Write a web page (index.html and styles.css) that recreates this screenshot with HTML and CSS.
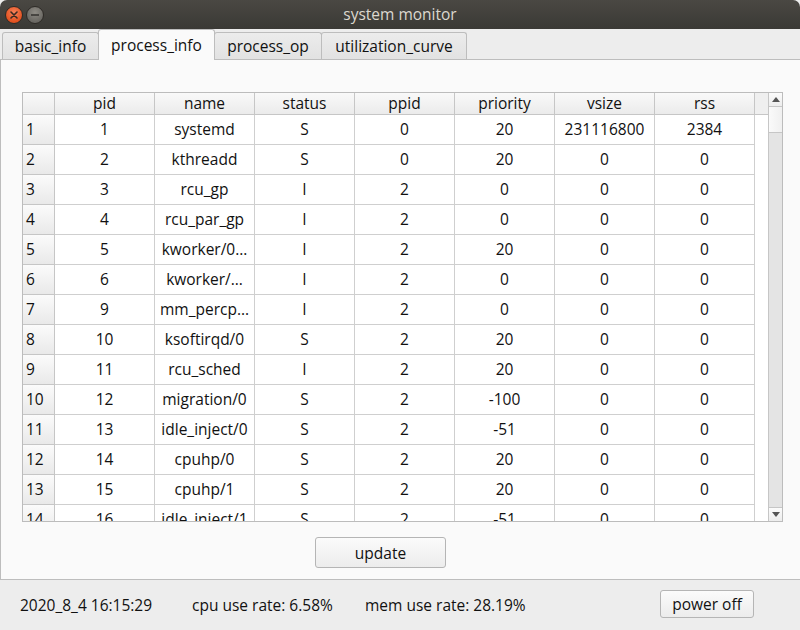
FILE: index.html
```html
<!DOCTYPE html>
<html>
<head>
<meta charset="utf-8">
<title>system monitor</title>
<link rel="stylesheet" href="styles.css">
</head>
<body>
<div class="window">
  <div class="titlebar">
    <div class="wbtns">
      <span class="wbtn close">
        <svg width="8" height="8" viewBox="0 0 8 8"><path d="M1 1L7 7M7 1L1 7" stroke="#3a2a22" stroke-width="1.6" stroke-linecap="round"/></svg>
      </span>
      <span class="wbtn min">
        <svg width="8" height="8" viewBox="0 0 8 8"><path d="M0.5 4H7.5" stroke="#33322f" stroke-width="1.6" stroke-linecap="round"/></svg>
      </span>
    </div>
    <div class="title">system monitor</div>
    <div></div>
  </div>

  <div class="tabbar">
    <div class="tab w1">basic_info</div>
    <div class="tab w2 active">process_info</div>
    <div class="tab w3">process_op</div>
    <div class="tab w4">utilization_curve</div>
  </div>

  <div class="pane">
    <div class="tableview">
      <div class="grid">
        <div class="hd corner"></div>
        <div class="hd">pid</div><div class="hd">name</div><div class="hd">status</div><div class="hd">ppid</div><div class="hd">priority</div><div class="hd">vsize</div><div class="hd">rss</div><div class="hd fill"></div>

        <div class="vh">1</div><div class="c">1</div><div class="c">systemd</div><div class="c">S</div><div class="c">0</div><div class="c">20</div><div class="c">231116800</div><div class="c">2384</div><div class="f"></div>
        <div class="vh">2</div><div class="c">2</div><div class="c">kthreadd</div><div class="c">S</div><div class="c">0</div><div class="c">20</div><div class="c">0</div><div class="c">0</div><div class="f"></div>
        <div class="vh">3</div><div class="c">3</div><div class="c">rcu_gp</div><div class="c">I</div><div class="c">2</div><div class="c">0</div><div class="c">0</div><div class="c">0</div><div class="f"></div>
        <div class="vh">4</div><div class="c">4</div><div class="c">rcu_par_gp</div><div class="c">I</div><div class="c">2</div><div class="c">0</div><div class="c">0</div><div class="c">0</div><div class="f"></div>
        <div class="vh">5</div><div class="c">5</div><div class="c">kworker/0…</div><div class="c">I</div><div class="c">2</div><div class="c">20</div><div class="c">0</div><div class="c">0</div><div class="f"></div>
        <div class="vh">6</div><div class="c">6</div><div class="c">kworker/…</div><div class="c">I</div><div class="c">2</div><div class="c">0</div><div class="c">0</div><div class="c">0</div><div class="f"></div>
        <div class="vh">7</div><div class="c">9</div><div class="c">mm_percp…</div><div class="c">I</div><div class="c">2</div><div class="c">0</div><div class="c">0</div><div class="c">0</div><div class="f"></div>
        <div class="vh">8</div><div class="c">10</div><div class="c">ksoftirqd/0</div><div class="c">S</div><div class="c">2</div><div class="c">20</div><div class="c">0</div><div class="c">0</div><div class="f"></div>
        <div class="vh">9</div><div class="c">11</div><div class="c">rcu_sched</div><div class="c">I</div><div class="c">2</div><div class="c">20</div><div class="c">0</div><div class="c">0</div><div class="f"></div>
        <div class="vh">10</div><div class="c">12</div><div class="c">migration/0</div><div class="c">S</div><div class="c">2</div><div class="c">-100</div><div class="c">0</div><div class="c">0</div><div class="f"></div>
        <div class="vh">11</div><div class="c">13</div><div class="c">idle_inject/0</div><div class="c">S</div><div class="c">2</div><div class="c">-51</div><div class="c">0</div><div class="c">0</div><div class="f"></div>
        <div class="vh">12</div><div class="c">14</div><div class="c">cpuhp/0</div><div class="c">S</div><div class="c">2</div><div class="c">20</div><div class="c">0</div><div class="c">0</div><div class="f"></div>
        <div class="vh">13</div><div class="c">15</div><div class="c">cpuhp/1</div><div class="c">S</div><div class="c">2</div><div class="c">20</div><div class="c">0</div><div class="c">0</div><div class="f"></div>
        <div class="vh">14</div><div class="c">16</div><div class="c">idle_inject/1</div><div class="c">S</div><div class="c">2</div><div class="c">-51</div><div class="c">0</div><div class="c">0</div><div class="f"></div>
      </div>
      <div class="vscroll">
        <div class="sbtn up"><svg width="8" height="5" viewBox="0 0 8 5"><path d="M0 5L4 0L8 5Z" fill="#555"/></svg></div>
        <div class="handle"></div>
        <div class="track"></div>
        <div class="sbtn down"><svg width="8" height="5" viewBox="0 0 8 5"><path d="M0 0L4 5L8 0Z" fill="#555"/></svg></div>
      </div>
    </div>
    <button class="btn update">update</button>
  </div>

  <div class="statusbar">
    <span class="stat date">2020_8_4 16:15:29</span>
    <span class="stat cpu">cpu use rate: 6.58%</span>
    <span class="stat mem">mem use rate: 28.19%</span>
    <button class="btn power">power off</button>
  </div>
</div>
</body>
</html>
```

FILE: styles.css
```css
html, body {
  margin: 0;
  padding: 0;
  background: #ffffff;
}
body {
  font-family: "Open Sans", "Noto Sans", "DejaVu Sans", sans-serif;
  font-size: 15.5px;
  color: #111111;
}
.window {
  width: 800px;
  height: 630px;
  background: #ededed;
  display: flex;
  flex-direction: column;
  overflow: hidden;
}
.titlebar {
  height: 29px;
  flex: none;
  display: grid;
  grid-template-columns: 1fr auto 1fr;
  align-items: center;
  background: linear-gradient(to bottom, #4a4843, #3a3935);
  border-radius: 7px 7px 0 0;
}
.wbtns {
  display: flex;
  gap: 3px;
  padding-left: 5px;
  align-items: center;
}
.wbtn {
  width: 18px;
  height: 18px;
  border-radius: 50%;
  box-sizing: border-box;
  display: flex;
  align-items: center;
  justify-content: center;
}
.wbtn.close {
  background: radial-gradient(circle at 50% 35%, #f7825a, #e2511f 70%);
  border: 1px solid #2e2b27;
}
.wbtn.min {
  background: radial-gradient(circle at 50% 35%, #8f8c85, #6a6863 70%);
  border: 1px solid #2e2b27;
}
.title {
  color: #dcd8cf;
  font-size: 15.5px;
  line-height: 29px;
}

.tabbar {
  height: 30px;
  flex: none;
  display: flex;
  align-items: flex-end;
  padding-left: 2px;
  position: relative;
  z-index: 1;
}
.tab {
  box-sizing: border-box;
  height: 27px;
  border: 1px solid #bdbdbd;
  border-bottom: none;
  border-radius: 3px 3px 0 0;
  background: linear-gradient(to bottom, #ececec, #e2e2e2);
  text-align: center;
  line-height: 26px;
  margin-left: -1px;
  white-space: nowrap;
}
.tab:first-child { margin-left: 0; }
.tab.active {
  height: 31px;
  margin-bottom: -1px;
  background: #fafafa;
  line-height: 30px;
}
.w1 { width: 97px; }
.w2 { width: 117px; }
.w3 { width: 108px; }
.w4 { width: 146px; }

.pane {
  height: 521px;
  flex: none;
  box-sizing: border-box;
  background: #fafafa;
  border-top: 1px solid #bdbdbd;
  border-bottom: 1px solid #bdbdbd;
  border-left: 1px solid #bdbdbd;
  padding: 32px 0 0 21px;
  display: flex;
  flex-direction: column;
  align-items: flex-start;
}
.tableview {
  width: 761px;
  height: 430px;
  box-sizing: border-box;
  border: 1px solid #bcbcbc;
  display: flex;
  background: #ffffff;
}
.grid {
  flex: 1;
  overflow: hidden;
  display: grid;
  grid-template-columns: 32px repeat(7, 100px) 1fr;
  grid-template-rows: 22px;
  grid-auto-rows: 30px;
  align-content: start;
}
.hd, .vh, .c {
  box-sizing: border-box;
  border-right: 1px solid #cfcfcf;
  border-bottom: 1px solid #cfcfcf;
  white-space: nowrap;
  overflow: hidden;
}
.hd {
  background: linear-gradient(to bottom, #f9f9f9, #ebebeb);
  text-align: center;
  line-height: 21px;
  border-color: #c6c6c6;
}
.hd.fill {
  border-right: none;
  background: #efefef;
}
.vh {
  background: linear-gradient(to bottom, #fbfbfb, #e9e9e9);
  padding-left: 3px;
  line-height: 29px;
  border-color: #c6c6c6;
}
.c {
  text-align: center;
  line-height: 29px;
}
.f { background: #ffffff; }

.vscroll {
  width: 14px;
  flex: none;
  box-sizing: border-box;
  border-left: 1px solid #c6c6c6;
  display: flex;
  flex-direction: column;
  background: #e4e4e4;
}
.sbtn {
  height: 14px;
  flex: none;
  box-sizing: border-box;
  background: linear-gradient(to bottom, #fbfbfb, #ededed);
  display: flex;
  align-items: center;
  justify-content: center;
}
.sbtn.up { border-bottom: 1px solid #c6c6c6; }
.sbtn.down { border-top: 1px solid #c6c6c6; }
.handle {
  height: 26px;
  flex: none;
  box-sizing: border-box;
  background: linear-gradient(to right, #fafafa, #f0f0f0);
  border-bottom: 1px solid #c6c6c6;
}
.track { flex: 1; }

.btn {
  font-family: "Open Sans", "Noto Sans", "DejaVu Sans", sans-serif;
  font-size: 15.5px;
  color: #111111;
  box-sizing: border-box;
  border: 1px solid #b5b5b5;
  border-radius: 3px;
  background: linear-gradient(to bottom, #fbfbfb, #ececec);
  padding: 0;
}
.update {
  width: 131px;
  height: 31px;
  margin: 15px 0 0 293px;
}

.statusbar {
  flex: 1;
  display: flex;
  align-items: center;
  padding-left: 20px;
  padding-right: 46px;
}
.stat { white-space: nowrap; }
.date { width: 172px; }
.cpu { width: 173px; }
.power {
  margin-left: auto;
  width: 94px;
  height: 28px;
  margin-top: -3px;
}
```
